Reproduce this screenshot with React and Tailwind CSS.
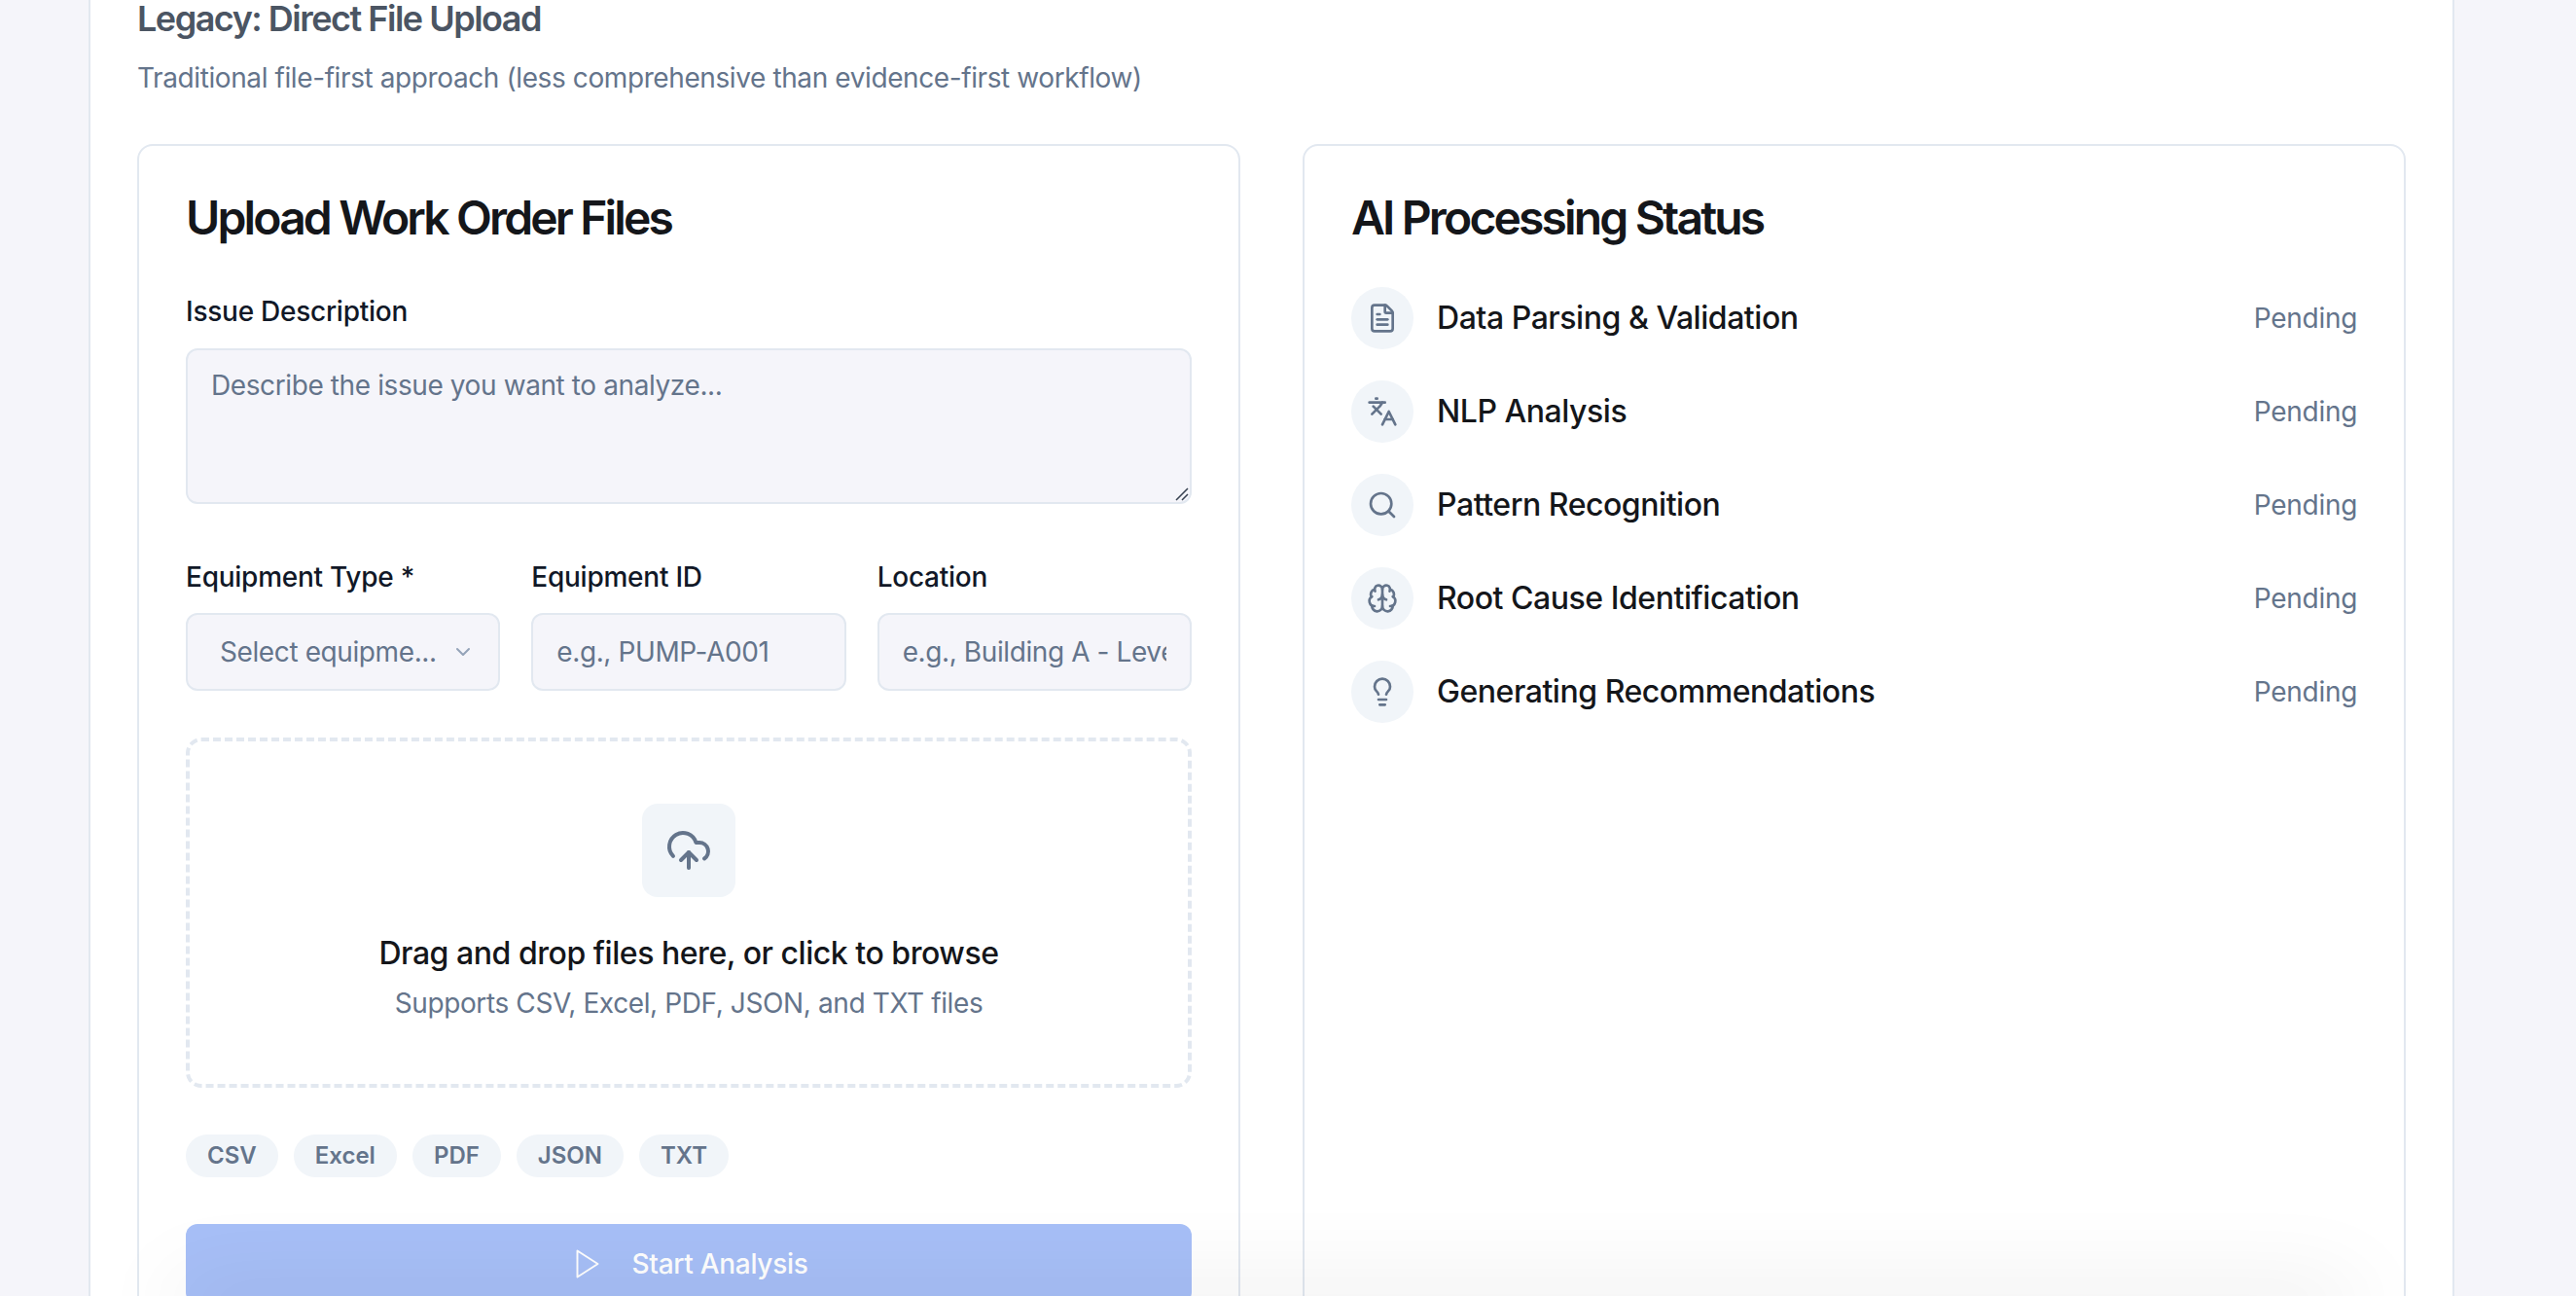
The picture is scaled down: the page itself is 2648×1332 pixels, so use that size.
import { ChevronDown, CloudUpload, FileText, Languages, Search, Brain, Lightbulb } from 'lucide-react'

const STEPS = [
  { label: 'Data Parsing & Validation', icon: FileText },
  { label: 'NLP Analysis', icon: Languages },
  { label: 'Pattern Recognition', icon: Search },
  { label: 'Root Cause Identification', icon: Brain },
  { label: 'Generating Recommendations', icon: Lightbulb },
]

const FORMATS = ['CSV', 'Excel', 'PDF', 'JSON', 'TXT']

const fieldClass =
  'h-[80px] w-full rounded-[12px] border-2 border-[#e2e8f0] bg-[#f5f5fa] px-[24px] text-[28px] tracking-[-0.4px] text-[#111827] placeholder:text-[#64748b] outline-none'

function FieldLabel({ children }) {
  return <label className="block text-[28px] leading-[28px] font-medium tracking-[-0.25px] text-[#111827]">{children}</label>
}

export default function App() {
  return (
    <div className="relative h-[1332px] overflow-hidden bg-[#f5f5fa] font-['Inter',sans-serif]">
      <div className="-mt-[24px] ml-[91px] w-[2432px] border-x-2 border-[#e2e8f0] bg-white px-[48px] pt-[23px]">
        <h3 className="h-[40px] text-[36px] leading-[40px] font-semibold tracking-[-1.5px] text-[#4b5563]">
          Legacy: Direct File Upload
        </h3>
        <p className="mt-[21px] text-[28px] leading-[40px] tracking-[-0.4px] text-[#64748b]">
          Traditional file-first approach (less comprehensive than evidence-first workflow)
        </p>

        <div className="mt-[48px] grid grid-cols-2 gap-[64px]">
          <section className="h-[1400px] rounded-[16px] border-2 border-[#e2e8f0] bg-white p-[48px]">
            <h2 className="text-[48px] leading-[52px] font-semibold tracking-[-2.85px] text-[#14161a]">
              Upload Work Order Files
            </h2>

            <div className="mt-[56px]">
              <FieldLabel>Issue Description</FieldLabel>
              <div className="relative mt-[24px]">
                <textarea
                  className="block h-[160px] w-full resize-none rounded-[12px] border-2 border-[#e2e8f0] bg-[#f5f5fa] px-[24px] py-[17px] text-[28px] leading-[38px] tracking-[-0.4px] placeholder:text-[#64748b] outline-none"
                  placeholder="Describe the issue you want to analyze..."
                />
                <svg className="absolute right-[3px] bottom-[3px] h-[14px] w-[14px] text-[#374151]" viewBox="0 0 14 14" fill="none" stroke="currentColor" strokeWidth="1.5">
                  <path d="M1 13 13 1M7 13l6-6" />
                </svg>
              </div>
            </div>

            <div className="mt-[61px] grid grid-cols-3 gap-[32px]">
              <div>
                <FieldLabel>Equipment Type *</FieldLabel>
                <div className="mt-[23px] flex h-[80px] items-center justify-between rounded-[12px] border-2 border-[#e2e8f0] bg-[#f5f5fa] pr-[24px] pl-[33px] text-[28px] tracking-[-0.4px] text-[#64748b]">
                  <span className="truncate">Select equipme...</span>
                  <ChevronDown className="h-[24px] w-[24px] shrink-0 text-[#94a3b8]" strokeWidth={2} />
                </div>
              </div>
              <div>
                <FieldLabel>Equipment ID</FieldLabel>
                <input className={`${fieldClass} mt-[23px]`} placeholder="e.g., PUMP-A001" />
              </div>
              <div>
                <FieldLabel>Location</FieldLabel>
                <input className={`${fieldClass} mt-[23px]`} placeholder="e.g., Building A - Level 2" />
              </div>
            </div>

            <div className="mt-[48px] flex h-[360px] flex-col items-center rounded-[16px] border-[4px] border-dashed border-[#e2e8f0] pt-[64px]">
              <div className="flex h-[96px] w-[96px] items-center justify-center rounded-[16px] bg-[#f1f5f9]">
                <CloudUpload className="h-[48px] w-[48px] text-[#64748b]" strokeWidth={2} />
              </div>
              <p className="mt-[38px] text-[32px] leading-[40px] font-medium tracking-[-0.46px] text-[#14161a]">
                Drag and drop files here, or click to browse
              </p>
              <p className="mt-[11px] text-[28px] leading-[40px] tracking-[-0.38px] text-[#64748b]">
                Supports CSV, Excel, PDF, JSON, and TXT files
              </p>
            </div>

            <div className="mt-[48px] flex gap-[16px]">
              {FORMATS.map((format) => (
                <span
                  key={format}
                  className="flex h-[44px] items-center rounded-full bg-[#f1f5f9] px-[22px] text-[24px] font-semibold text-[#64748b]"
                >
                  {format}
                </span>
              ))}
            </div>

            <button
              type="button"
              className="mt-[48px] flex h-[82px] w-full items-center justify-center gap-[28px] rounded-[12px] bg-[#a7bff7] text-[28px] font-medium tracking-[-0.3px] text-white"
            >
              <svg className="h-[36px] w-[36px]" viewBox="0 0 24 24" fill="none" stroke="currentColor" strokeWidth="1.3" strokeLinejoin="round">
                <path d="M5 3l14 9-14 9V3z" />
              </svg>
              Start Analysis
            </button>
          </section>

          <section className="h-[1400px] rounded-[16px] border-2 border-[#e2e8f0] bg-white p-[48px]">
            <h2 className="text-[48px] leading-[52px] font-semibold tracking-[-2.85px] text-[#14161a]">
              AI Processing Status
            </h2>
            <div className="mt-[45px] flex flex-col gap-[32px]">
              {STEPS.map(({ label, icon: Icon }) => (
                <div key={label} className="flex items-center gap-[24px]">
                  <div className="flex h-[64px] w-[64px] items-center justify-center rounded-full bg-[#f1f5f9]">
                    <Icon className="h-[32px] w-[32px] text-[#64748b]" strokeWidth={2} />
                  </div>
                  <span className="flex-1 text-[32px] font-medium tracking-[-0.46px] text-[#14161a]">{label}</span>
                  <span className="text-[28px] tracking-[-0.3px] text-[#64748b]">Pending</span>
                </div>
              ))}
            </div>
          </section>
        </div>
      </div>
      <div className="pointer-events-none absolute right-[228px] -bottom-[20px] left-[180px] h-[20px] shadow-[0_0_90px_rgba(0,0,0,0.18)]" />
    </div>
  )
}
